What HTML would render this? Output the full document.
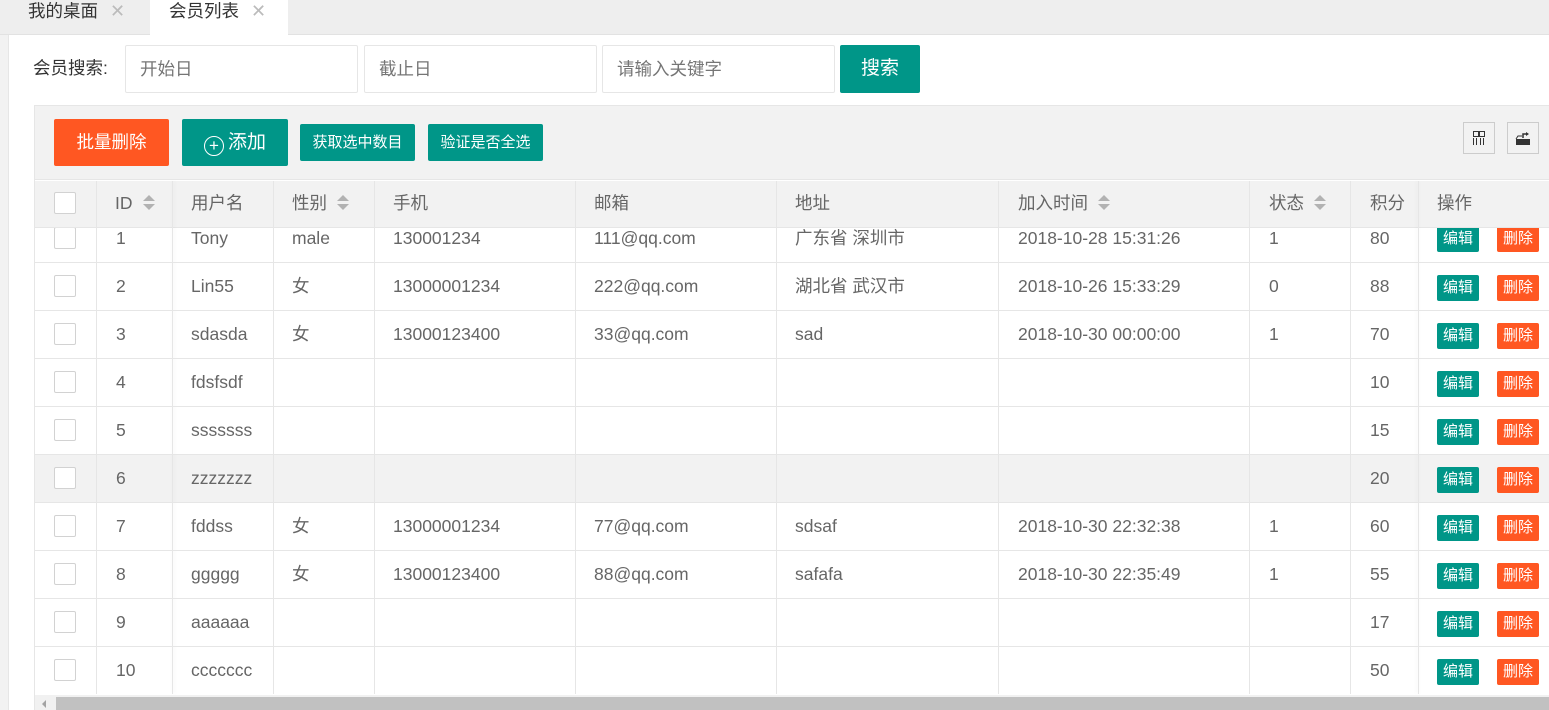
<!DOCTYPE html>
<html><head><meta charset="utf-8"><style>
*{margin:0;padding:0;box-sizing:border-box}
body{width:1549px;height:710px;overflow:hidden;background:#fff;font-family:"Liberation Sans","Noto Sans CJK SC",sans-serif;color:#666;position:relative}
.a{position:absolute}
.tabbar{left:0;top:0;width:1549px;height:35px;background:#eee;border-bottom:1px solid #e2e2e2}
.tab{top:0;height:22px;line-height:22px;font-size:17.5px;color:#333}
.x{color:#bbb;font-size:18px;margin-left:12px}
.inp{top:45px;height:48px;border:1px solid #e6e6e6;border-radius:2px;font-size:17.5px;color:#757575;padding-left:14px;line-height:46px}
.btn{color:#fff;text-align:center;border-radius:2px}
.cell{position:absolute;font-size:17.5px;color:#666;white-space:nowrap;line-height:22px;height:22px}
.vl{position:absolute;width:1px;background:#e6e6e6}
.hl{position:absolute;height:1px;background:#e6e6e6}
.cb{position:absolute;left:54px;width:22px;height:22px;border:1px solid #d2d2d2;border-radius:2px;background:#fff}
.sort{display:inline-block;width:12px;height:16px;vertical-align:-2px;margin-left:10px;position:relative}
.sort:before{content:"";position:absolute;left:0;top:0;border:6px solid transparent;border-bottom:6px solid #b2b2b2;border-top:0}
.sort:after{content:"";position:absolute;left:0;top:9px;border:6px solid transparent;border-top:6px solid #b2b2b2;border-bottom:0}
.eb{position:absolute;width:42px;height:26px;border-radius:2px;color:#fff;font-size:15px;line-height:26px;text-align:center}
</style></head><body>
<div class="a" style="left:0;top:0;width:9px;height:710px;background:#f2f2f2;border-right:1px solid #e6e6e6"></div>
<div class="a tabbar"></div>
<div class="a tab" style="left:28px">我的桌面<span class="x">✕</span></div>
<div class="a" style="left:150px;top:0;width:138px;height:35px;background:#fff"></div>
<div class="a tab" style="left:169px">会员列表<span class="x">✕</span></div>
<div class="a" style="left:9px;top:35px;width:1540px;height:675px;background:#fff"></div>

<div class="a" style="left:33px;top:57px;font-size:17.5px;line-height:22px;color:#333">会员搜索:</div>
<div class="a inp" style="left:125px;width:233px">开始日</div>
<div class="a inp" style="left:364px;width:233px">截止日</div>
<div class="a inp" style="left:602px;width:233px">请输入关键字</div>
<div class="a btn" style="left:840px;top:45px;width:80px;height:48px;background:#009688;font-size:19px;line-height:48px">搜索</div>

<div class="a" style="left:34px;top:105px;width:1515px;height:605px;border:1px solid #e6e6e6;border-right:0;background:#fff"></div>
<div class="a" style="left:35px;top:106px;width:1514px;height:74px;background:#f2f2f2;border-bottom:1px solid #e6e6e6"></div>
<div class="a btn" style="left:54px;top:119px;width:115px;height:47px;background:#ff5722;font-size:17.5px;line-height:47px">批量删除</div>
<div class="a btn" style="left:182px;top:119px;width:106px;height:47px;background:#009688;font-size:19px;line-height:47px"><span style="display:inline-block;width:20px;height:20px;border:1px solid #fff;border-radius:50%;font-size:17px;line-height:17px;vertical-align:-3px;margin-right:4px">+</span>添加</div>
<div class="a btn" style="left:300px;top:124px;width:115px;height:37px;background:#009688;font-size:15px;line-height:37px">获取选中数目</div>
<div class="a btn" style="left:428px;top:124px;width:115px;height:37px;background:#009688;font-size:15px;line-height:37px">验证是否全选</div>
<div class="a" style="left:1463px;top:122px;width:32px;height:32px;border:1px solid #ccc">
<svg width="30" height="30" viewBox="0 0 30 30"><rect x="9.5" y="8.5" width="5" height="5" fill="none" stroke="#333"/><rect x="15.5" y="8.5" width="5" height="5" fill="none" stroke="#333"/><path d="M9.5 15v7M12.5 15v7M16.5 15v7M19.5 15v7" stroke="#333"/></svg></div>
<div class="a" style="left:1507px;top:122px;width:32px;height:32px;border:1px solid #ccc">
<svg width="30" height="30" viewBox="0 0 30 30"><path d="M8 16h14v6H8z" fill="#333"/><path d="M8 16l2-3h4" stroke="#333" fill="none"/><path d="M15 15v-4h4" stroke="#333" fill="none" stroke-width="1.5"/><path d="M18 9l3 2-3 2z" fill="#333"/></svg></div>

<div class="a" style="left:35px;top:181px;width:1514px;height:47px;background:#f2f2f2;border-bottom:1px solid #e6e6e6"></div>
<div class="a" style="left:35px;top:455px;width:1514px;height:47px;background:#f2f2f2"></div>
<div class="vl" style="left:96px;top:181px;height:513px"></div>
<div class="vl" style="left:172px;top:181px;height:513px;box-shadow:1px 0 4px rgba(0,0,0,.08)"></div>
<div class="vl" style="left:273px;top:181px;height:513px"></div>
<div class="vl" style="left:374px;top:181px;height:513px"></div>
<div class="vl" style="left:575px;top:181px;height:513px"></div>
<div class="vl" style="left:776px;top:181px;height:513px"></div>
<div class="vl" style="left:998px;top:181px;height:513px"></div>
<div class="vl" style="left:1249px;top:181px;height:513px"></div>
<div class="vl" style="left:1350px;top:181px;height:513px"></div>
<div class="vl" style="left:1418px;top:181px;height:513px;box-shadow:-1px 0 4px rgba(0,0,0,.08)"></div>
<div class="hl" style="left:35px;top:262px;width:1514px"></div>
<div class="hl" style="left:35px;top:310px;width:1514px"></div>
<div class="hl" style="left:35px;top:358px;width:1514px"></div>
<div class="hl" style="left:35px;top:406px;width:1514px"></div>
<div class="hl" style="left:35px;top:454px;width:1514px"></div>
<div class="hl" style="left:35px;top:502px;width:1514px"></div>
<div class="hl" style="left:35px;top:550px;width:1514px"></div>
<div class="hl" style="left:35px;top:598px;width:1514px"></div>
<div class="hl" style="left:35px;top:646px;width:1514px"></div>

<div class="cb" style="top:192px"></div>
<div class="cell" style="left:115px;top:192px">ID<span class="sort"></span></div>
<div class="cell" style="left:191px;top:192px">用户名</div>
<div class="cell" style="left:292px;top:192px">性别<span class="sort"></span></div>
<div class="cell" style="left:393px;top:192px">手机</div>
<div class="cell" style="left:594px;top:192px">邮箱</div>
<div class="cell" style="left:795px;top:192px">地址</div>
<div class="cell" style="left:1018px;top:192px">加入时间<span class="sort"></span></div>
<div class="cell" style="left:1269px;top:192px">状态<span class="sort"></span></div>
<div class="cell" style="left:1370px;top:192px">积分</div>
<div class="cell" style="left:1437px;top:192px">操作</div>

<div class="a" style="left:0;top:228px;width:1549px;height:34px;overflow:hidden">
<div style="position:relative;top:-228px;height:300px">
<div class="cb" style="top:227px"></div><div class="cell" style="left:116px;top:227px">1</div><div class="cell" style="left:191px;top:227px">Tony</div><div class="cell" style="left:292px;top:227px">male</div><div class="cell" style="left:393px;top:227px">130001234</div><div class="cell" style="left:594px;top:227px">111@qq.com</div><div class="cell" style="left:795px;top:227px">广东省 深圳市</div><div class="cell" style="left:1018px;top:227px">2018-10-28 15:31:26</div><div class="cell" style="left:1269px;top:227px">1</div><div class="cell" style="left:1370px;top:227px">80</div>
<div class="eb" style="left:1437px;top:226px;background:#009688">编辑</div><div class="eb" style="left:1497px;top:226px;background:#ff5722">删除</div>
</div></div>

<div class="cb" style="top:275px"></div><div class="cell" style="left:116px;top:275px">2</div><div class="cell" style="left:191px;top:275px">Lin55</div><div class="cell" style="left:292px;top:275px">女</div><div class="cell" style="left:393px;top:275px">13000001234</div><div class="cell" style="left:594px;top:275px">222@qq.com</div><div class="cell" style="left:795px;top:275px">湖北省 武汉市</div><div class="cell" style="left:1018px;top:275px">2018-10-26 15:33:29</div><div class="cell" style="left:1269px;top:275px">0</div><div class="cell" style="left:1370px;top:275px">88</div>
<div class="cb" style="top:323px"></div><div class="cell" style="left:116px;top:323px">3</div><div class="cell" style="left:191px;top:323px">sdasda</div><div class="cell" style="left:292px;top:323px">女</div><div class="cell" style="left:393px;top:323px">13000123400</div><div class="cell" style="left:594px;top:323px">33@qq.com</div><div class="cell" style="left:795px;top:323px">sad</div><div class="cell" style="left:1018px;top:323px">2018-10-30 00:00:00</div><div class="cell" style="left:1269px;top:323px">1</div><div class="cell" style="left:1370px;top:323px">70</div>
<div class="cb" style="top:371px"></div><div class="cell" style="left:116px;top:371px">4</div><div class="cell" style="left:191px;top:371px">fdsfsdf</div><div class="cell" style="left:1370px;top:371px">10</div>
<div class="cb" style="top:419px"></div><div class="cell" style="left:116px;top:419px">5</div><div class="cell" style="left:191px;top:419px">sssssss</div><div class="cell" style="left:1370px;top:419px">15</div>
<div class="cb" style="top:467px"></div><div class="cell" style="left:116px;top:467px">6</div><div class="cell" style="left:191px;top:467px">zzzzzzz</div><div class="cell" style="left:1370px;top:467px">20</div>
<div class="cb" style="top:515px"></div><div class="cell" style="left:116px;top:515px">7</div><div class="cell" style="left:191px;top:515px">fddss</div><div class="cell" style="left:292px;top:515px">女</div><div class="cell" style="left:393px;top:515px">13000001234</div><div class="cell" style="left:594px;top:515px">77@qq.com</div><div class="cell" style="left:795px;top:515px">sdsaf</div><div class="cell" style="left:1018px;top:515px">2018-10-30 22:32:38</div><div class="cell" style="left:1269px;top:515px">1</div><div class="cell" style="left:1370px;top:515px">60</div>
<div class="cb" style="top:563px"></div><div class="cell" style="left:116px;top:563px">8</div><div class="cell" style="left:191px;top:563px">ggggg</div><div class="cell" style="left:292px;top:563px">女</div><div class="cell" style="left:393px;top:563px">13000123400</div><div class="cell" style="left:594px;top:563px">88@qq.com</div><div class="cell" style="left:795px;top:563px">safafa</div><div class="cell" style="left:1018px;top:563px">2018-10-30 22:35:49</div><div class="cell" style="left:1269px;top:563px">1</div><div class="cell" style="left:1370px;top:563px">55</div>
<div class="cb" style="top:611px"></div><div class="cell" style="left:116px;top:611px">9</div><div class="cell" style="left:191px;top:611px">aaaaaa</div><div class="cell" style="left:1370px;top:611px">17</div>
<div class="cb" style="top:659px"></div><div class="cell" style="left:116px;top:659px">10</div><div class="cell" style="left:191px;top:659px">ccccccc</div><div class="cell" style="left:1370px;top:659px">50</div>

<div class="eb" style="left:1437px;top:275px;background:#009688">编辑</div><div class="eb" style="left:1497px;top:275px;background:#ff5722">删除</div>
<div class="eb" style="left:1437px;top:323px;background:#009688">编辑</div><div class="eb" style="left:1497px;top:323px;background:#ff5722">删除</div>
<div class="eb" style="left:1437px;top:371px;background:#009688">编辑</div><div class="eb" style="left:1497px;top:371px;background:#ff5722">删除</div>
<div class="eb" style="left:1437px;top:419px;background:#009688">编辑</div><div class="eb" style="left:1497px;top:419px;background:#ff5722">删除</div>
<div class="eb" style="left:1437px;top:467px;background:#009688">编辑</div><div class="eb" style="left:1497px;top:467px;background:#ff5722">删除</div>
<div class="eb" style="left:1437px;top:515px;background:#009688">编辑</div><div class="eb" style="left:1497px;top:515px;background:#ff5722">删除</div>
<div class="eb" style="left:1437px;top:563px;background:#009688">编辑</div><div class="eb" style="left:1497px;top:563px;background:#ff5722">删除</div>
<div class="eb" style="left:1437px;top:611px;background:#009688">编辑</div><div class="eb" style="left:1497px;top:611px;background:#ff5722">删除</div>
<div class="eb" style="left:1437px;top:659px;background:#009688">编辑</div><div class="eb" style="left:1497px;top:659px;background:#ff5722">删除</div>

<div class="a" style="left:35px;top:695px;width:1514px;height:15px;background:#f1f1f1"></div>
<div class="a" style="left:56px;top:697px;width:1493px;height:13px;background:#c1c1c1"></div>
<div class="a" style="left:42px;top:700px;width:0;height:0;border:4px solid transparent;border-right:4px solid #a3a3a3;border-left:0"></div>
</body></html>
